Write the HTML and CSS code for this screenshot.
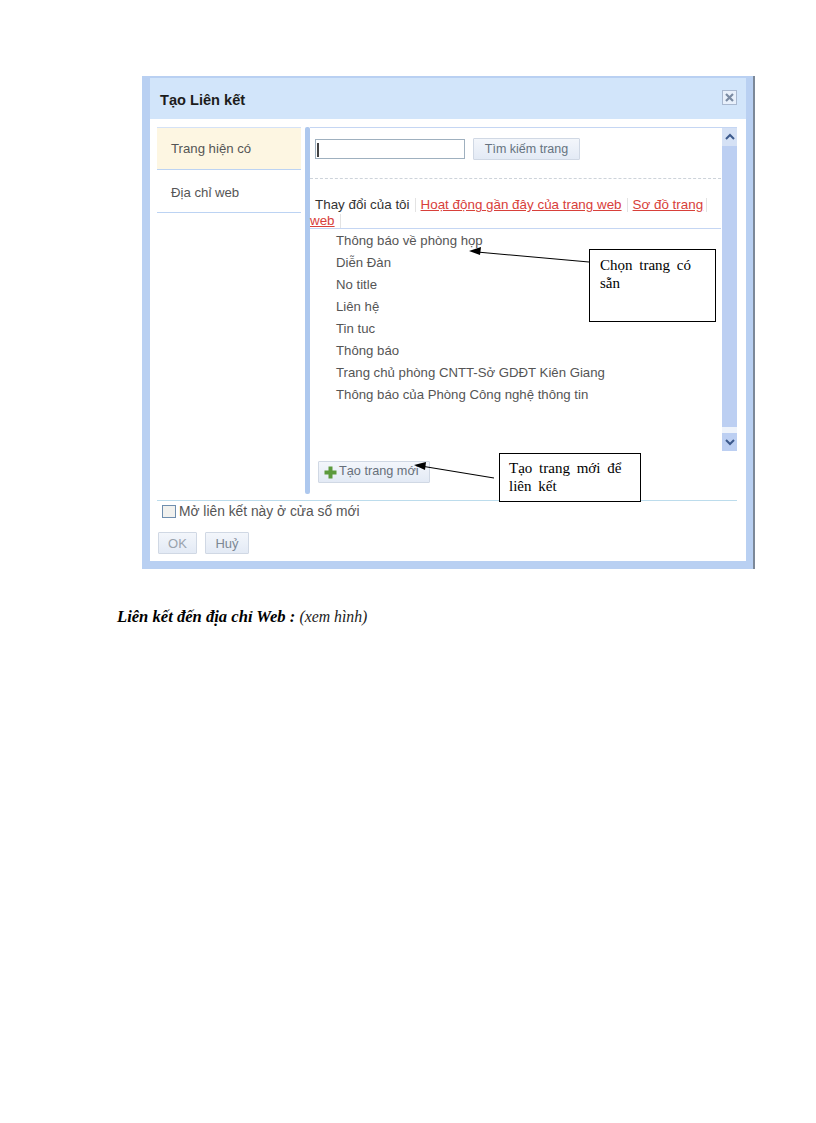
FILE: index.html
```html
<!DOCTYPE html>
<html lang="vi">
<head>
<meta charset="utf-8">
<title>Tạo Liên kết</title>
<link rel="stylesheet" href="styles.css">
</head>
<body>
<main class="page">
  <section class="dialog">
    <header class="titlebar">
      <h1 class="title">Tạo Liên kết</h1>
      <span class="close"><svg width="13" height="13" viewBox="0 0 13 13"><path d="M3 3l7 7M10 3l-7 7" stroke="#7b8ba3" stroke-width="2.2" fill="none"/></svg></span>
    </header>
    <div class="content">
      <div class="columns">
        <nav class="sidebar">
          <div class="side-item active">Trang hiện có</div>
          <div class="side-item">Địa chỉ web</div>
        </nav>
        <div class="divider"></div>
        <div class="pane">
          <div class="scrollarea">
            <div class="search">
              <div class="input"><span class="caret"></span></div>
              <div class="btn btn-search">Tìm kiếm trang</div>
            </div>
            <div class="tabs">
              <span class="tab-self">Thay đổi của tôi</span><span class="sep"></span><a class="tab">Hoạt động gần đây của trang web</a><span class="sep"></span><a class="tab">Sơ đồ trang</a><span class="sep sep-end"></span><br><a class="tab tab-wrap">web</a><span class="sep"></span>
            </div>
            <ul class="list">
              <li>Thông báo về phòng họp</li>
              <li>Diễn Đàn</li>
              <li>No title</li>
              <li>Liên hệ</li>
              <li>Tin tuc</li>
              <li>Thông báo</li>
              <li>Trang chủ phòng CNTT-Sở GDĐT Kiên Giang</li>
              <li>Thông báo của Phòng Công nghệ thông tin</li>
            </ul>
          </div>
          <div class="scrollbar">
            <span class="arrow"><svg width="12" height="8" viewBox="0 0 12 8"><path d="M2 6l4-4 4 4" stroke="#3d5a8c" stroke-width="2" fill="none"/></svg></span>
            <span class="thumb"></span>
            <span class="arrow arrow-down"><svg width="12" height="8" viewBox="0 0 12 8"><path d="M2 2l4 4 4-4" stroke="#3d5a8c" stroke-width="2" fill="none"/></svg></span>
          </div>
          <div class="new-row">
            <div class="btn btn-new"><svg width="13" height="13" viewBox="0 0 13 13"><path d="M4.500 0.500h4v4h4v4h-4v4h-4v-4h-4v-4h4z" fill="#5c9a3c"/></svg><span>Tạo trang mới</span></div>
          </div>
        </div>
      </div>
      <div class="footer">
        <label class="check"><span class="box"></span>Mở liên kết này ở cửa sổ mới</label>
        <div class="actions">
          <div class="btn btn-ok">OK</div>
          <div class="btn btn-cancel">Huỷ</div>
        </div>
      </div>
    </div>
    <svg class="arrows" width="613" height="493" viewBox="0 0 613 493">
      <path d="M447 186L335 176" stroke="#000" stroke-width="1.100" fill="none"/>
      <path d="M327 175l12-4-1 8z" fill="#000"/>
      <path d="M352 402L279 390" stroke="#000" stroke-width="1.100" fill="none"/>
      <path d="M272 389l12-3-1 8z" fill="#000"/>
    </svg>
    <div class="note note-a">Chọn trang có sẵn</div>
    <div class="note note-b">Tạo trang mới để liên kết</div>
  </section>
  <p class="caption"><strong>Liên kết đến địa chỉ Web :</strong> <em>(xem hình)</em></p>
</main>
</body>
</html>
```

FILE: styles.css
```css
* { box-sizing: border-box; }
html, body { margin: 0; padding: 0; background: #fff; }
.page { width: 816px; height: 1123px; padding-top: 76px; overflow: hidden; }

.dialog {
  position: relative;
  width: 613px;
  height: 493px;
  margin-left: 142px;
  background: #fff;
  border-style: solid;
  border-color: #b9d0f2;
  border-width: 2px 9px 8px 8px;
  font-family: "Liberation Sans", Arial, sans-serif;
  color: #555;
  font-size: 13.200px;
  display: flex;
  flex-direction: column;
}
.dialog::after {
  content: "";
  position: absolute;
  top: -2px;
  bottom: -8px;
  right: -9px;
  width: 2px;
  background: #7c8898;
}
.titlebar {
  height: 41px;
  flex: none;
  background: #d2e5fa;
  display: flex;
  align-items: center;
  justify-content: space-between;
  padding: 3px 9px 0 10px;
}
.title { margin: 0; font-size: 14.600px; font-weight: 700; color: #1c1c1c; }
.close {
  width: 15px; height: 15px;
  display: flex; align-items: center; justify-content: center;
  border: 1px solid #a9b8cf;
  background: #e8f0fb;
  margin-top: -6px;
}

.content { flex: 1; display: flex; flex-direction: column; padding: 8px 9px 0 7px; }
.columns { display: flex; height: 367px; flex: none; }
.sidebar { width: 144px; flex: none; }
.side-item {
  height: 43px;
  padding: 15px 0 0 14px;
  border-bottom: 1px solid #bcd3f3;
  color: #555;
}
.side-item.active { background: #fdf6e2; border-top: 1px solid #d5e2f6; padding-top: 13px; }
.divider { width: 5px; flex: none; margin-left: 4px; background: #aec8ee; border-radius: 2px; }

.pane { flex: 1; position: relative; display: grid; grid-template-columns: 1fr 15px; grid-template-rows: 323px 1fr; border-top: 1px solid #c5d6f3; }
.scrollarea { grid-column: 1; grid-row: 1; padding-top: 11px; min-width: 0; }
.search { display: flex; gap: 8px; padding-left: 5px; height: 40px; border-bottom: 1px dashed #cdd3da; margin-right: 1px; }
.input { width: 150px; height: 20px; border: 1px solid #9fb0bf; padding: 3px 1px; }
.caret { display: block; width: 2px; height: 14px; background: #444; }
.btn {
  display: flex; align-items: center; justify-content: center;
  background: linear-gradient(#f3f6fb, #e3eaf5);
  border: 1px solid #d0d8e4;
  color: #7a8591;
  border-radius: 1px;
}
.btn-search { width: 107px; height: 22px; margin-top: -1px; color: #667380; font-size: 12.500px; }

.tabs { padding-top: 18px; height: 50px; line-height: 16px; font-size: 13.400px; border-bottom: 1px solid #c5d6f3; white-space: nowrap; margin-right: 1px; }
.tab-self { margin-left: 5px; color: #333; }
.tab { color: #d8403a; text-decoration: underline; }
.sep { display: inline-block; width: 1px; height: 14px; background: #e3e3e3; margin: 0 5px; vertical-align: -3px; }
.sep-end { margin-right: 0; margin-left: 3px; }

.list { list-style: none; margin: 0; padding: 1px 0 0 26px; }
.list li { height: 22px; line-height: 22px; color: #555; }

.scrollbar { grid-column: 2; grid-row: 1; display: flex; flex-direction: column; background: #eef3fb; }
.arrow { height: 18px; display: flex; align-items: center; justify-content: center; background: #d5e1f5; flex: none; }
.thumb { flex: 1; background: #bccff2; }
.arrow-down { background: #bccff2; margin-top: 6px; }

.new-row { grid-column: 1 / -1; grid-row: 2; padding: 10px 0 0 8px; }
.btn-new { width: 112px; height: 22px; gap: 2px; color: #666f7a; font-size: 12.700px; justify-content: flex-start; padding: 0 0 2px 5px; }
.btn-new svg { flex: none; margin-top: 2px; }

.footer { flex: 1; border-top: 1px solid #bcdcec; margin-top: 6px; padding: 2px 0 0 5px; }
.check { display: flex; align-items: center; gap: 3px; height: 16px; color: #555; font-size: 13.800px; }
.box { width: 14px; height: 13px; border: 1px solid #6f8eae; background: #f1f1ee; }
.actions { display: flex; gap: 8px; margin: 13px 0 0 -4px; font-size: 13px; }
.btn-ok { width: 39px; height: 22px; color: #9aa3ad; }
.btn-cancel { width: 44px; height: 22px; color: #7c8794; }

.arrows { position: absolute; left: -8px; top: -2px; pointer-events: none; }
.note {
  position: absolute;
  background: #fff;
  border: 1px solid #000;
  font-family: "Liberation Serif", "Times New Roman", serif;
  font-size: 15px;
  line-height: 18px;
  color: #000;
  word-spacing: 3px;
}
.note-a { left: 439px; top: 171px; width: 127px; height: 73px; padding: 6px 10px; }
.note-b { left: 349px; top: 375px; width: 142px; height: 49px; padding: 5px 9px; }

.caption {
  margin: 38px 0 0 117px;
  font-family: "Liberation Serif", "Times New Roman", serif;
  font-size: 16.600px;
  line-height: 20px;
  color: #000;
}
.caption strong { font-style: italic; }
.caption em { font-size: 15.800px; color: #222; }
```
